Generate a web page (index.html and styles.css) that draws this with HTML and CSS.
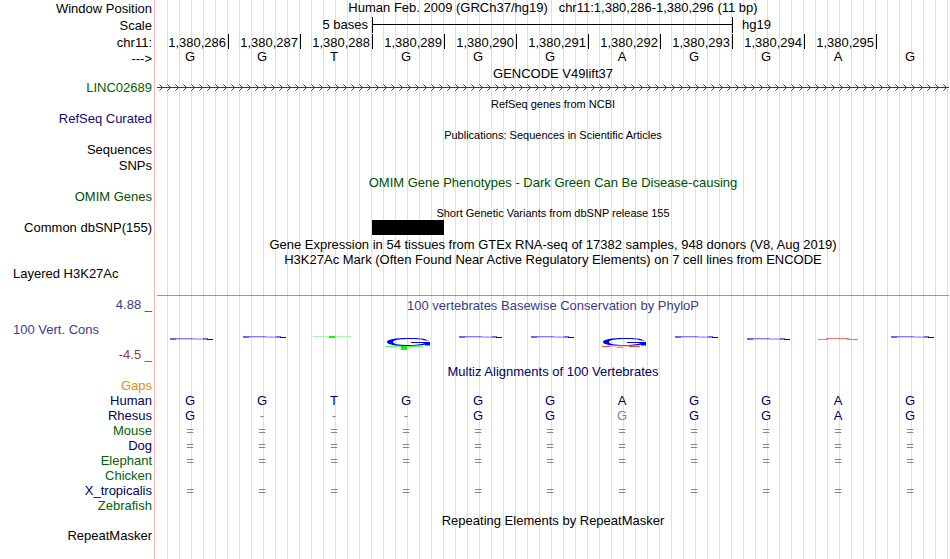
FILE: index.html
```html
<!DOCTYPE html>
<html lang="en">
<head>
    <meta charset="UTF-8">
    <meta name="viewport" content="width=device-width, initial-scale=1.0">
    <title>Human chr11:1,380,286-1,380,296</title>
    <link rel="stylesheet" href="styles.css">
</head>
<body>
<main class="browser">
    <div class="guidelines"></div>
    <div class="tracks">
        <!-- position, scale and ruler -->
        <div class="row ruler-row">
            <div class="label">Window Position</div>
            <h1 class="heading">Human Feb. 2009 (GRCh37/hg19)&nbsp;&nbsp; chr11:1,380,286-1,380,296 (11 bp)</h1>
        </div>
        <div class="row ruler-row">
            <div class="label">Scale</div>
            <div class="bases scale">
                <span class="scale-text">5 bases</span>
                <span class="scale-bar"></span>
                <span class="scale-db">hg19</span>
            </div>
        </div>
        <div class="row ruler-row">
            <div class="label">chr11:</div>
            <div class="bases ticks">
                <span>1,380,286</span>
                <span>1,380,287</span>
                <span>1,380,288</span>
                <span>1,380,289</span>
                <span>1,380,290</span>
                <span>1,380,291</span>
                <span>1,380,292</span>
                <span>1,380,293</span>
                <span>1,380,294</span>
                <span>1,380,295</span>
            </div>
        </div>
        <div class="row">
            <div class="label">---&gt;</div>
            <div class="bases sequence">
                <span>G</span><span>G</span><span>T</span><span>G</span><span>G</span><span>G</span><span>A</span><span>G</span><span>G</span><span>A</span><span>G</span>
            </div>
        </div>

        <!-- genes -->
        <h2 class="heading title">GENCODE V49lift37</h2>
        <div class="row item">
            <div class="label green">LINC02689</div>
            <svg class="gene" width="100%" height="15">
                <defs>
                    <pattern id="strand" width="8" height="15" patternUnits="userSpaceOnUse">
                        <path d="M2.5 4.5L5.5 7.5L2.5 10.5" fill="none" stroke="#006400"/>
                    </pattern>
                </defs>
                <rect width="100%" height="15" fill="url(#strand)"/>
                <rect y="7" width="100%" height="1" fill="#006400"/>
            </svg>
        </div>
        <h2 class="heading title small">RefSeq genes from NCBI</h2>
        <div class="row item">
            <div class="label blue">RefSeq Curated</div>
        </div>
        <h2 class="heading title small">Publications: Sequences in Scientific Articles</h2>
        <div class="row item-dense">
            <div class="label">Sequences</div>
        </div>
        <div class="row item">
            <div class="label">SNPs</div>
        </div>
        <h2 class="heading title omim">OMIM Gene Phenotypes - Dark Green Can Be Disease-causing</h2>
        <div class="row item">
            <div class="label omim">OMIM Genes</div>
        </div>
        <h2 class="heading title small">Short Genetic Variants from dbSNP release 155</h2>
        <div class="row item">
            <div class="label">Common dbSNP(155)</div>
            <div class="bases">
                <span class="snp"></span>
            </div>
        </div>
        <h2 class="heading">Gene Expression in 54 tissues from GTEx RNA-seq of 17382 samples, 948 donors (V8, Aug 2019)</h2>
        <h2 class="heading title">H3K27Ac Mark (Often Found Near Active Regulatory Elements) on 7 cell lines from ENCODE</h2>
        <div class="row signal">
            <div class="label left">Layered H3K27Ac</div>
        </div>

        <!-- conservation -->
        <div class="row">
            <div class="label axis">
                <span class="phylop">4.88 _</span>
                <span class="left phylop">100 Vert. Cons</span>
                <span class="negative">-4.5 _</span>
            </div>
            <div class="conservation">
                <h2 class="phylop">100 vertebrates Basewise Conservation by PhyloP</h2>
                <svg class="logo" width="100%" height="50" viewBox="0 0 792 50" preserveAspectRatio="none">
                    <defs>
                        <g id="flat-g" fill="#0000ff">
                            <rect x="0" y="0" width="6" height="2" opacity=".6"/>
                            <rect x="6" y="0" width="17" height="1" opacity=".5"/>
                            <rect x="6" y="1" width="17" height="1" opacity=".2"/>
                            <rect x="23" y="0" width="10" height="1" opacity=".25"/>
                            <rect x="23" y="1" width="10" height="1" opacity=".3"/>
                            <rect x="33" y="0" width="5" height="1" opacity=".6"/>
                            <rect x="33" y="1" width="4" height="1" opacity=".5"/>
                            <rect x="37" y="1" width="6" height="1" fill="#0000dc"/>
                        </g>
                        <path id="tall-g" fill="#0000ff" d="M42 2.6C38 .5 30 0 22 0C8 0 0 1.5 0 4S8 8 22 8C29 8 34 7.5 38 6.8V7.5H43V4H24V5H38C34 6.6 28 7 22 7C11 7 6 6 6 4S12 1 22 1C30 1 36 1.5 38 2.6z"/>
                    </defs>
                    <use href="#flat-g" x="13" y="25"/>
                    <use href="#flat-g" x="86" y="23"/>
                    <rect x="156" y="23" width="38" height="1" fill="#a8f8a8"/>
                    <rect x="172" y="23" width="6" height="2" fill="#00ff00"/>
                    <use href="#tall-g" x="230" y="25"/>
                    <rect x="228" y="33" width="38" height="1" fill="#60ff60"/>
                    <rect x="244" y="33" width="6" height="4" fill="#00ff00"/>
                    <use href="#flat-g" x="302" y="23"/>
                    <use href="#flat-g" x="374" y="23"/>
                    <use href="#tall-g" x="446" y="25"/>
                    <path d="M445 33.5H453M472 33.5H483" stroke="#ff4040"/>
                    <path d="M453 33H472" stroke="#ff9090"/>
                    <rect x="460" y="34" width="6" height="1" fill="#40f040"/>
                    <use href="#flat-g" x="518" y="23"/>
                    <use href="#flat-g" x="590" y="25"/>
                    <path d="M661 26.5H671M690 26.5H701" stroke="#ff5050" opacity=".8"/>
                    <path d="M669 25.5H692" stroke="#ff7070"/>
                    <use href="#flat-g" x="734" y="23"/>
                </svg>
            </div>
        </div>

        <!-- multiple alignment -->
        <h2 class="heading title navy">Multiz Alignments of 100 Vertebrates</h2>
        <table class="alignment">
            <tr><th class="gaps" scope="row">Gaps</th><td></td><td></td><td></td><td></td><td></td><td></td><td></td><td></td><td></td><td></td><td></td></tr>
            <tr><th scope="row">Human</th><td>G</td><td>G</td><td>T</td><td>G</td><td>G</td><td>G</td><td>A</td><td>G</td><td>G</td><td>A</td><td>G</td></tr>
            <tr><th scope="row">Rhesus</th><td>G</td><td class="pale">-</td><td class="pale">-</td><td class="pale">-</td><td>G</td><td>G</td><td class="pale">G</td><td>G</td><td>G</td><td>A</td><td>G</td></tr>
            <tr class="pale"><th class="green" scope="row">Mouse</th><td>=</td><td>=</td><td>=</td><td>=</td><td>=</td><td>=</td><td>=</td><td>=</td><td>=</td><td>=</td><td>=</td></tr>
            <tr class="pale"><th scope="row">Dog</th><td>=</td><td>=</td><td>=</td><td>=</td><td>=</td><td>=</td><td>=</td><td>=</td><td>=</td><td>=</td><td>=</td></tr>
            <tr class="pale"><th class="green" scope="row">Elephant</th><td>=</td><td>=</td><td>=</td><td>=</td><td>=</td><td>=</td><td>=</td><td>=</td><td>=</td><td>=</td><td>=</td></tr>
            <tr><th class="green" scope="row">Chicken</th><td></td><td></td><td></td><td></td><td></td><td></td><td></td><td></td><td></td><td></td><td></td></tr>
            <tr class="pale"><th scope="row">X_tropicalis</th><td>=</td><td>=</td><td>=</td><td>=</td><td>=</td><td>=</td><td>=</td><td>=</td><td>=</td><td>=</td><td>=</td></tr>
            <tr><th class="green" scope="row">Zebrafish</th><td></td><td></td><td></td><td></td><td></td><td></td><td></td><td></td><td></td><td></td><td></td></tr>
        </table>

        <h2 class="heading">Repeating Elements by RepeatMasker</h2>
        <div class="row item">
            <div class="label">RepeatMasker</div>
        </div>
    </div>
</main>
</body>
</html>
```
FILE: styles.css
```css
:root {
    --label-width: 157px;
    --green: #006400;
    --blue: #0c0c78;
    --navy: #000064;
    --omim: #005000;
    --phylop: #3c3c8c;
    --negative: #8c3c3c;
    --guide: #dcdcfa;
}

* {
    box-sizing: border-box;
    margin: 0;
    padding: 0;
}

body {
    font-family: "Liberation Sans", Arial, Helvetica, sans-serif;
    font-size: 13px;
    line-height: 15px;
    color: #000;
    background-color: #fff;
}

h1,
h2,
th {
    font-size: inherit;
    font-weight: normal;
}

/* guidelines and tracks share one cell, so the lines run behind every track */
.browser {
    display: grid;
    grid-template-columns: minmax(0, 1fr);
    min-height: 100vh;
}

.guidelines,
.tracks {
    grid-area: 1 / 1;
}

.guidelines {
    margin-left: 154px;
    margin-right: 1px;
    padding-left: 2px;
    border-left: 1px solid #ffb4b4;
    background-image: linear-gradient(to right, transparent 10px, var(--guide) 10px, var(--guide) 11px, transparent 11px);
    background-size: calc(100% / 66) 100%;
    background-origin: content-box;
    background-clip: content-box;
}

.tracks {
    padding-right: 1px;
}

.row {
    display: grid;
    grid-template-columns: var(--label-width) minmax(0, 1fr);
    align-items: start;
}

.label {
    padding-right: 5px;
    text-align: right;
    white-space: nowrap;
}

.left {
    padding-left: 13px;
    text-align: left;
}

.heading {
    text-align: center;
    white-space: nowrap;
}

h2.heading {
    margin-left: var(--label-width);
}

.title {
    height: 14px;
}

.small {
    font-size: 11px;
}

.item {
    height: 17px;
}

.item-dense {
    height: 16px;
}

.signal {
    height: 29px;
}

/* one column for each base in the window */
.bases {
    display: grid;
    grid-template-columns: repeat(11, minmax(0, 1fr));
}

.ruler-row {
    height: 17px;
}

.ruler-row .label,
.ticks {
    line-height: 17px;
}

.scale-text {
    grid-column: 1 / 4;
    padding-right: 5px;
    text-align: right;
}

.scale-bar {
    grid-column: 4 / 9;
    height: 16px;
    margin-left: -1px;
    border: solid #000;
    border-width: 0 1px;
    background: linear-gradient(#000, #000) 0 7px / 100% 1px no-repeat;
}

.scale-db {
    padding-left: 9px;
}

.ticks span {
    height: 15px;
    padding-right: 2px;
    border-right: 1px solid #000;
    text-align: right;
}

.sequence {
    line-height: 11px;
}

.sequence span {
    padding-right: 6px;
    text-align: center;
}

.gene,
.logo {
    display: block;
}

.snp {
    grid-column: 4;
    height: 15px;
    margin-left: -1px;
    margin-right: 1px;
    background-color: #000;
}

.axis {
    display: flex;
    flex-direction: column;
    justify-content: space-between;
    height: 69px;
    padding-top: 2px;
    padding-bottom: 2px;
}

.conservation {
    padding-top: 2px;
    border-top: 1px solid #40c0c0;
    text-align: center;
}

.alignment {
    width: 100%;
    table-layout: fixed;
    border-collapse: collapse;
    color: var(--navy);
}

.alignment th {
    width: var(--label-width);
    padding-right: 5px;
    text-align: right;
    color: var(--navy);
}

.alignment td {
    height: 15px;
    padding-right: 6px;
    text-align: center;
}

.alignment .pale {
    color: #8080b4;
}

.green,
.alignment .green {
    color: var(--green);
}

.alignment .gaps {
    color: #e68c0a;
}

.blue {
    color: var(--blue);
}

.navy {
    color: var(--navy);
}

.omim {
    color: var(--omim);
}

.phylop {
    color: var(--phylop);
}

.negative {
    color: var(--negative);
}
```
